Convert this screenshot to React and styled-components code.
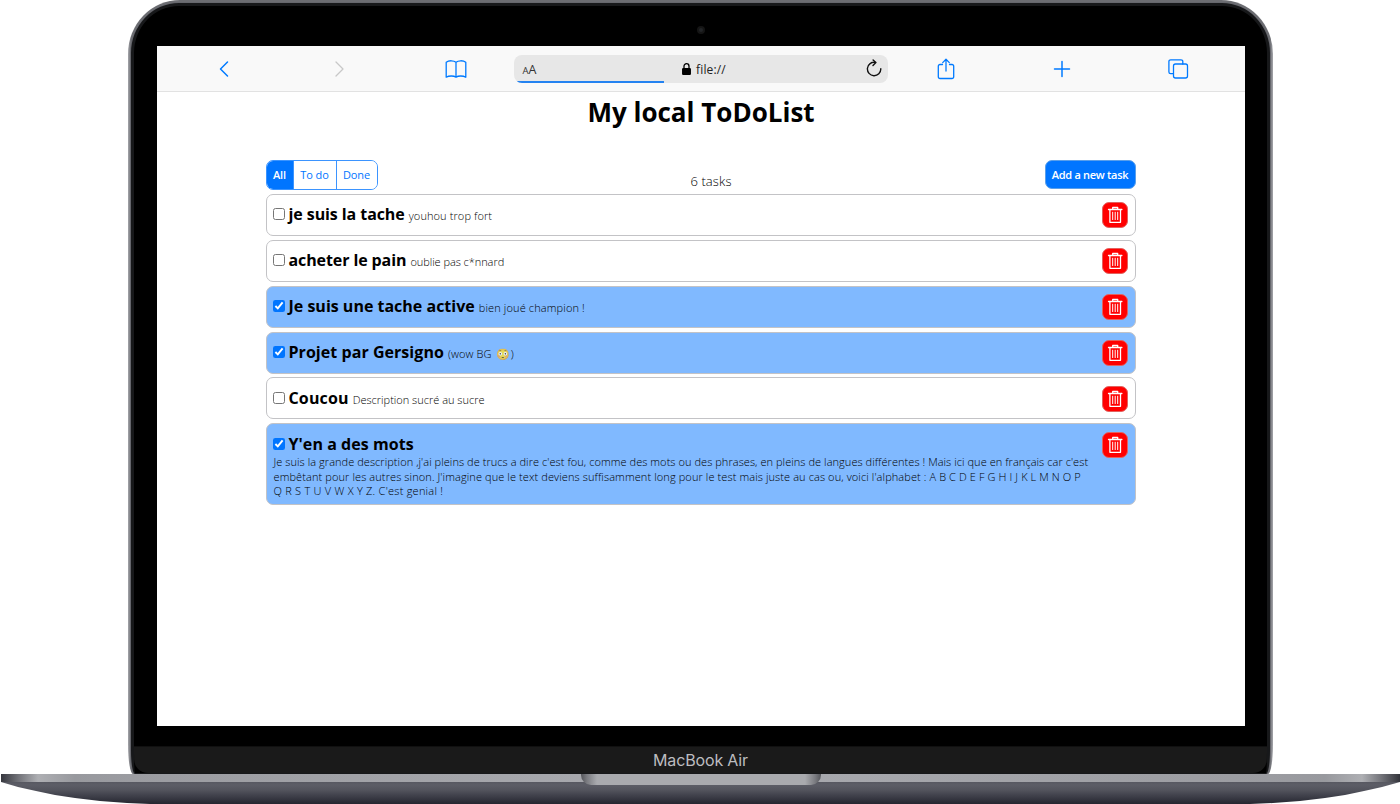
import React from 'react';
import styled, { createGlobalStyle } from 'styled-components';

const GlobalStyle = createGlobalStyle`
  *, *::before, *::after { box-sizing: border-box; }
  body {
    margin: 0;
    background: #fff;
    color: #000;
    font-family: 'Open Sans', 'Noto Sans', sans-serif;
  }
`;

const Page = styled.div`
  width: 1400px;
  height: 804px;
  overflow: hidden;
  display: flex;
  flex-direction: column;
  align-items: center;
`;

const Lid = styled.div`
  width: 1145px;
  height: 774px;
  margin-left: 1px;
  padding: 2px 2px 0;
  border-radius: 52px 52px 5px 5px / 54px 54px 30px 30px;
  background: linear-gradient(90deg, #a5a6ab 0, #6c6d72 3px, #6c6d72 1142px, #a5a6ab 100%);
`;

const Rim = styled.div`
  height: 100%;
  padding: 1px 1px 0;
  border-radius: 50px 50px 4px 4px / 52px 52px 26px 26px;
  background: #66676d;
`;

const Bezel = styled.div`
  height: 100%;
  display: flex;
  flex-direction: column;
  align-items: center;
  border: solid #17181a;
  border-width: 3px 3px 1px;
  border-radius: 48px 48px 4px 4px / 50px 50px 24px 24px;
  background: #000;
  overflow: hidden;
`;

const CameraBar = styled.div`
  height: 40px;
  flex: none;
  display: flex;
  align-items: center;
  padding-top: 7px;
`;

const Camera = styled.div`
  width: 8px;
  height: 8px;
  border: 2px solid #151515;
  border-radius: 50%;
  background: #222427;
`;

const Screen = styled.div`
  width: 1088px;
  height: 680px;
  flex: none;
  background: #fff;
`;

const Chin = styled.div`
  width: 100%;
  flex: 1;
  margin-top: 20px;
  display: flex;
  justify-content: center;
  background: #1a1a1a;
  border-top: 1px solid #101010;
  border-radius: 0 0 14px 14px;
  color: #bdbdc0;
  font: 400 16px/26px Inter, 'Liberation Sans', sans-serif;
  letter-spacing: -0.15px;
`;

const Base = styled.div`
  width: 1400px;
  height: 30px;
  background: linear-gradient(#4a4b54 0, #5c5d66 11px, #53545d 16px, #42434d 21px, #252630 30px);
  clip-path: polygon(
    1px 0, 1400px 0, 1400px 8px, 1382px 13px, 1364px 17px, 1345px 21px, 1325px 24px, 1300px 27px, 1273px 29px, 1250px 30px,
    150px 30px, 127px 29px, 100px 27px, 75px 24px, 55px 21px, 36px 17px, 18px 13px, 1px 8px
  );
`;

const Deck = styled.div`
  height: 8px;
  display: flex;
  justify-content: center;
  background: linear-gradient(90deg, #33343b 0, #77787e 20px, #aeafb3 38px, #98999e 75px, #9b9ca1 130px, #a7a8ad 580px,
    #a7a8ad 820px, #9b9ca1 1270px, #98999e 1325px, #aeafb3 1362px, #77787e 1380px, #33343b 100%);
`;

const Notch = styled.div`
  width: 240px;
  height: 11px;
  margin-left: 2px;
  border-radius: 0 0 10px 10px;
  background: linear-gradient(90deg, #55565b 0, #7b7c81 6px, #a9aaae 16px, #a9aaae 224px, #7b7c81 234px, #55565b 100%);
`;

const Toolbar = styled.div`
  height: 46px;
  display: flex;
  align-items: center;
  background: #f9f9f9;
  border-bottom: 1px solid #e2e2e2;
`;

const NavGroup = styled.div`
  width: ${(p) => p.$width}px;
  padding: 0 ${(p) => p.$end}px 0 ${(p) => p.$start}px;
  display: flex;
  justify-content: space-between;
`;

const Icon = styled.svg`
  display: block;
  flex: none;
  width: ${(p) => p.$w || 24}px;
  height: ${(p) => p.$h || 24}px;
  fill: none;
  stroke: ${(p) => p.$color || '#007aff'};
  stroke-width: ${(p) => p.$stroke || 1.3};
  stroke-linecap: round;
  stroke-linejoin: round;
`;

const AddressBar = styled.div`
  position: relative;
  width: 374px;
  height: 28px;
  display: flex;
  align-items: center;
  justify-content: space-between;
  padding: 0 5px 0 9px;
  overflow: hidden;
  border-radius: 8px;
  background: #e7e7e7;
`;

const Progress = styled.div`
  position: absolute;
  left: 3px;
  bottom: 0;
  width: 147px;
  height: 2px;
  background: #2483f1;
`;

const TextSize = styled.span`
  width: 20px;
  font-size: 12.5px;
  line-height: 20px;
  color: #333;
  padding-top: 3px;
  small { font-size: 9.5px; }
`;

const Address = styled.span`
  display: flex;
  align-items: center;
  gap: 5px;
  margin-left: 1px;
  padding-top: 1px;
  font-size: 12px;
  color: #222;
  letter-spacing: 0.15px;
`;

const Content = styled.main`
  width: 870px;
  margin: 0 auto;
`;

const Title = styled.h1`
  margin: 0;
  height: 68px;
  padding-left: 1px;
  font-size: 26px;
  line-height: 41px;
  font-weight: 700;
  text-align: center;
`;

const Controls = styled.div`
  height: 30px;
  display: flex;
  justify-content: space-between;
  align-items: flex-start;
`;

const Filters = styled.div`
  width: 112px;
  height: 29.5px;
  display: flex;
  border: 1px solid #3b94ff;
  border-radius: 7px;
  overflow: hidden;
`;

const Filter = styled.button`
  width: ${(p) => p.$width}px;
  padding: 0;
  border: 0;
  border-left: ${(p) => (p.$active ? 0 : '1px solid #3b94ff')};
  background: ${(p) => (p.$active ? '#0075ff' : '#fff')};
  color: ${(p) => (p.$active ? '#fff' : '#0075ff')};
  font: ${(p) => (p.$active ? 600 : 400)} 11px 'Open Sans', sans-serif;
  letter-spacing: -0.1px;
`;

const Count = styled.div`
  padding-top: 11px;
  font-size: 13px;
  line-height: 20px;
  font-weight: 300;
  letter-spacing: 0.1px;
`;

const AddButton = styled.button`
  width: 91px;
  height: 29px;
  padding: 0;
  border: 1px solid #5a9fea;
  border-radius: 7px;
  background: #0075ff;
  color: #fff;
  font: 600 11px 'Open Sans', sans-serif;
  letter-spacing: -0.3px;
  white-space: nowrap;
`;

const CountSlot = styled.div`
  width: 646px;
  display: flex;
  justify-content: center;
`;

const Tasks = styled.div`
  display: flex;
  flex-direction: column;
  gap: 3.87px;
  padding-top: 4px;
`;

const Task = styled.article`
  min-height: 42px;
  display: flex;
  justify-content: space-between;
  align-items: flex-start;
  padding: 7.3px 6.5px 6px 7px;
  border: 1px solid #c3c3c6;
  border-radius: 7px;
  background: ${(p) => (p.$done ? '#80b9ff' : '#fff')};
`;

const TaskHead = styled.div`
  height: 24px;
  display: flex;
  align-items: baseline;
`;

const Check = styled.input`
  width: 12px;
  height: 12px;
  margin: 0 4px 0 -1px;
  align-self: center;
  accent-color: #0075ff;
`;

const Name = styled.h2`
  margin: 0;
  font-size: 16px;
  line-height: 24px;
  font-weight: 700;
  letter-spacing: ${(p) => p.$track || 0}px;
`;

const Note = styled.span`
  margin-left: 4px;
  font-size: 11px;
  font-weight: 300;
  letter-spacing: ${(p) => p.$track || 0}px;
`;

const LongNote = styled.p`
  margin: -0.5px 0 0;
  font-size: 11px;
  line-height: 14.4px;
  font-weight: 300;
  white-space: nowrap;
`;

const NoteLine = styled.span`
  display: block;
  letter-spacing: ${(p) => p.$track}px;
`;

const Emoji = styled.span`
  opacity: 0.8;
  margin: 0 1px;
`;

const DeleteButton = styled.button`
  width: 26px;
  height: 26px;
  flex: none;
  display: grid;
  place-items: center;
  padding: 0;
  border: 1px solid #e3625f;
  border-radius: 7px;
  background: #f00;
`;

const TrashIcon = () => (
  <Icon $w={16} $h={18} $color="#fff" $stroke={1.3} viewBox="0 0 16 18">
    <path d="M1.5 3.5h13.4M5.7 3.3V1.5h5v1.8M2.9 4v12.3h10.6V4" />
    <path d="M5.7 6.2v7.4M8.2 6.2v7.4M10.7 6.2v7.4" strokeWidth="1" />
  </Icon>
);

const tasks = [
  { name: 'je suis la tache', note: 'youhou trop fort', track: -0.08, noteTrack: 0.1 },
  { name: 'acheter le pain', note: 'oublie pas c*nnard', track: -0.1, noteTrack: -0.05 },
  { name: 'Je suis une tache active', note: 'bien joué champion !', done: true, noteTrack: 0.13 },
  { name: 'Projet par Gersigno', note: '(wow BG ', emoji: '😳', done: true, track: 0.05, noteTrack: 0.1 },
  { name: 'Coucou', note: 'Description sucré au sucre', track: 0.15 },
  {
    name: "Y'en a des mots",
    done: true,
    track: 0.06,
    lines: [
      ["Je suis la grande description ,j'ai pleins de trucs a dire c'est fou, comme des mots ou des phrases, en pleins de langues différentes ! Mais ici que en français car c'est", 0.059],
      ["embêtant pour les autres sinon. J'imagine que le text deviens suffisamment long pour le test mais juste au cas ou, voici l'alphabet : A B C D E F G H I J K L M N O P", 0.1],
      ["Q R S T U V W X Y Z. C'est genial !", 0.24],
    ],
  },
];

export default function App() {
  return (
    <Page>
      <GlobalStyle />
      <Lid>
        <Rim>
          <Bezel>
            <CameraBar><Camera /></CameraBar>
            <Screen>
              <Toolbar>
                <NavGroup $width={357} $start={55} $end={46}>
                  <Icon viewBox="0 0 24 24" $stroke={1.5}><path d="M15.5 5 8.5 12l7 7" /></Icon>
                  <Icon viewBox="0 0 24 24" $color="#c8c8c8"><path d="m8 5 7 7-7 7" /></Icon>
                  <Icon viewBox="0 0 24 24">
                    <path d="M12 5.2C9.8 3.4 4.9 3.2 2.2 5.2v15c2.7-1.6 7.6-1.6 9.8 0 2.2-1.6 7.1-1.6 9.8 0v-15C19.1 3.2 14.2 3.4 12 5.2v15" />
                  </Icon>
                </NavGroup>
                <AddressBar>
                  <TextSize><small>A</small>A</TextSize>
                  <Address>
                    <Icon $w={9} $h={12} $color="#000" viewBox="0 0 9 12">
                      <rect x="0.7" y="5.6" width="7.6" height="5.8" rx="0.6" fill="#000" />
                      <path d="M2 5.5V3.2a2.5 2.5 0 0 1 5 0v2.3" />
                    </Icon>
                    file://
                  </Address>
                  <Icon $w={18} $h={20} $color="#111" $stroke={1.4} viewBox="0 0 18 20">
                    <path d="M15.8 9.8A6.7 6.7 0 1 1 10.3 3.4M8.1.9l2.8 2.6-2.9 2.9" />
                  </Icon>
                  <Progress />
                </AddressBar>
                <NavGroup $width={357} $start={46} $end={55}>
                  <Icon viewBox="0 0 24 24">
                    <path d="M8.5 7.5H6A1.7 1.7 0 0 0 4.3 9.2v10.6a1.7 1.7 0 0 0 1.7 1.7h12a1.7 1.7 0 0 0 1.7-1.7V9.2A1.7 1.7 0 0 0 18 7.5h-2.5M12 14V2.6M8.7 5.6 12 2.3l3.3 3.3" />
                  </Icon>
                  <Icon viewBox="0 0 24 24" $stroke={1.5}><path d="M12 4.5v15M4.5 12h15" /></Icon>
                  <Icon viewBox="0 0 24 24">
                    <rect x="7.5" y="7" width="14" height="14" rx="2" />
                    <path d="M7.3 16.7H4.7a1.8 1.8 0 0 1-1.8-1.8V4.6a1.8 1.8 0 0 1 1.8-1.8H15a1.8 1.8 0 0 1 1.8 1.8V7" />
                  </Icon>
                </NavGroup>
              </Toolbar>
              <Content>
                <Title>My local ToDoList</Title>
                <Controls>
                  <Filters>
                    <Filter $width={26} $active>All</Filter>
                    <Filter $width={43}>To do</Filter>
                    <Filter $width={41}>Done</Filter>
                  </Filters>
                  <CountSlot><Count>6 tasks</Count></CountSlot>
                  <AddButton>Add a new task</AddButton>
                </Controls>
                <Tasks>
                  {tasks.map((t) => (
                    <Task key={t.name} $done={t.done}>
                      <div>
                        <TaskHead>
                          <Check type="checkbox" defaultChecked={t.done} />
                          <Name $track={t.track}>{t.name}</Name>
                          {t.note && (
                            <Note $track={t.noteTrack}>
                              {t.note}
                              {t.emoji && <><Emoji>{t.emoji}</Emoji>)</>}
                            </Note>
                          )}
                        </TaskHead>
                        {t.lines && (
                          <LongNote>
                            {t.lines.map(([text, track]) => (
                              <NoteLine key={text} $track={track}>{text}</NoteLine>
                            ))}
                          </LongNote>
                        )}
                      </div>
                      <DeleteButton><TrashIcon /></DeleteButton>
                    </Task>
                  ))}
                </Tasks>
              </Content>
            </Screen>
            <Chin>MacBook Air</Chin>
          </Bezel>
        </Rim>
      </Lid>
      <Base>
        <Deck><Notch /></Deck>
      </Base>
    </Page>
  );
}
